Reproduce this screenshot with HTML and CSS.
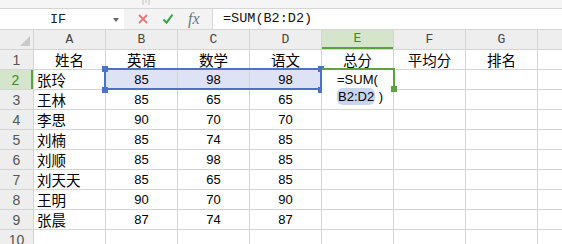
FILE: index.html
```html
<!DOCTYPE html>
<html lang="en">
<head>
    <meta charset="UTF-8">
    <meta name="viewport" content="width=device-width, initial-scale=1.0">
    <title>Sheet</title>
    <link rel="stylesheet" href="styles.css">
</head>
<body>
<div class="topStrip">
    <svg class="grip" width="10" height="6" viewBox="0 0 10 6"><path d="M2 0v5M5 0v3M8 0v5" stroke="#c4c4c4" stroke-width="1" fill="none"/></svg>
</div>

<div class="formulaBar">
    <div class="nameBox">
        <span class="nameText">IF</span>
        <span class="arrow"></span>
    </div>
    <div class="tools">
        <svg width="12" height="12" viewBox="0 0 12 12"><path d="M2 2l8 8M10 2l-8 8" stroke="#e5787a" stroke-width="1.8" fill="none"/></svg>
        <svg width="12" height="12" viewBox="0 0 12 12"><path d="M1.5 6.5l3 3.2 6-8" stroke="#3fa14a" stroke-width="2" fill="none"/></svg>
        <span class="fx">fx</span>
    </div>
    <div class="formula">=SUM(B2:D2)</div>
</div>

<div class="sheet">
    <div class="corner"><span class="tri"></span></div>
    <div class="colHead">A</div>
    <div class="colHead">B</div>
    <div class="colHead">C</div>
    <div class="colHead">D</div>
    <div class="colHead active">E</div>
    <div class="colHead">F</div>
    <div class="colHead">G</div>
    <div class="colHead"></div>

    <div class="rowHead">1</div>
    <div class="cell mid cn">姓名</div>
    <div class="cell mid cn">英语</div>
    <div class="cell mid cn">数学</div>
    <div class="cell mid cn">语文</div>
    <div class="cell mid cn">总分</div>
    <div class="cell mid cn">平均分</div>
    <div class="cell mid cn">排名</div>
    <div class="cell"></div>

    <div class="rowHead active">2</div>
    <div class="cell cn">张玲</div>
    <div class="cell mid sel">85</div>
    <div class="cell mid sel">98</div>
    <div class="cell mid sel">98</div>
    <div class="cell"></div>
    <div class="cell"></div>
    <div class="cell"></div>
    <div class="cell"></div>

    <div class="rowHead">3</div>
    <div class="cell cn">王林</div>
    <div class="cell mid">85</div>
    <div class="cell mid">65</div>
    <div class="cell mid">65</div>
    <div class="cell"></div>
    <div class="cell"></div>
    <div class="cell"></div>
    <div class="cell"></div>

    <div class="rowHead">4</div>
    <div class="cell cn">李思</div>
    <div class="cell mid">90</div>
    <div class="cell mid">70</div>
    <div class="cell mid">70</div>
    <div class="cell"></div>
    <div class="cell"></div>
    <div class="cell"></div>
    <div class="cell"></div>

    <div class="rowHead">5</div>
    <div class="cell cn">刘楠</div>
    <div class="cell mid">85</div>
    <div class="cell mid">74</div>
    <div class="cell mid">85</div>
    <div class="cell"></div>
    <div class="cell"></div>
    <div class="cell"></div>
    <div class="cell"></div>

    <div class="rowHead">6</div>
    <div class="cell cn">刘顺</div>
    <div class="cell mid">85</div>
    <div class="cell mid">98</div>
    <div class="cell mid">85</div>
    <div class="cell"></div>
    <div class="cell"></div>
    <div class="cell"></div>
    <div class="cell"></div>

    <div class="rowHead">7</div>
    <div class="cell cn">刘天天</div>
    <div class="cell mid">85</div>
    <div class="cell mid">65</div>
    <div class="cell mid">85</div>
    <div class="cell"></div>
    <div class="cell"></div>
    <div class="cell"></div>
    <div class="cell"></div>

    <div class="rowHead">8</div>
    <div class="cell cn">王明</div>
    <div class="cell mid">90</div>
    <div class="cell mid">70</div>
    <div class="cell mid">90</div>
    <div class="cell"></div>
    <div class="cell"></div>
    <div class="cell"></div>
    <div class="cell"></div>

    <div class="rowHead">9</div>
    <div class="cell cn">张晨</div>
    <div class="cell mid">87</div>
    <div class="cell mid">74</div>
    <div class="cell mid">87</div>
    <div class="cell"></div>
    <div class="cell"></div>
    <div class="cell"></div>
    <div class="cell"></div>

    <div class="rowHead">10</div>
    <div class="cell"></div>
    <div class="cell"></div>
    <div class="cell"></div>
    <div class="cell"></div>
    <div class="cell"></div>
    <div class="cell"></div>
    <div class="cell"></div>
    <div class="cell"></div>

    <!-- selection B2:D2 -->
    <div class="selBox"></div>
    <span class="handle blue h1"></span>
    <span class="handle blue h2"></span>
    <span class="handle blue h3"></span>
    <span class="handle blue h4"></span>

    <!-- editing E2 -->
    <div class="editor">
        <div>=SUM(</div>
        <div><span class="ref">B2:D2</span> )</div>
    </div>
    <span class="greenTop"></span>
    <span class="greenRight"></span>
    <span class="handle green h5"></span>
</div>
</body>
</html>
```

FILE: styles.css
```css
*{
    margin: 0;
    padding: 0;
    box-sizing: border-box;
}
body{
    width: 562px;
    height: 244px;
    overflow: hidden;
    background-color: #fff;
    font-family: "Liberation Sans", Arial, sans-serif;
    color: #000;
}
.topStrip{
    height: 9px;
    background-color: #f5f5f5;
    border-bottom: 1px solid #d6d6d6;
    position: relative;
}
.grip{
    position: absolute;
    left: 141px;
    top: 0;
}
.formulaBar{
    height: 21px;
    display: flex;
    background-color: #f3f3f3;
    border-bottom: 1px solid #d6d6d6;
}
.nameBox{
    width: 124px;
    background-color: #fff;
    display: flex;
    align-items: center;
    justify-content: center;
    position: relative;
}
.nameText{
    font-family: "Liberation Mono", monospace;
    font-size: 13.5px;
    color: #222;
    margin-left: -8px;
}
.arrow{
    position: absolute;
    right: 5px;
    top: 9px;
    border-left: 3px solid transparent;
    border-right: 3px solid transparent;
    border-top: 4px solid #666;
}
.tools{
    width: 88px;
    display: flex;
    align-items: center;
    gap: 13px;
    padding-left: 13px;
}
.fx{
    font-family: "Liberation Serif", serif;
    font-style: italic;
    font-size: 16px;
    color: #66778f;
    margin-left: 1px;
}
.formula{
    flex: 1;
    background-color: #fff;
    border-left: 1px solid #d6d6d6;
    font-family: "Liberation Mono", monospace;
    font-size: 13.5px;
    line-height: 20px;
    padding-left: 10px;
    color: #111;
}
.sheet{
    position: relative;
    display: grid;
    grid-template-columns: 33px repeat(7, 71px) 1fr;
    grid-auto-rows: 19px;
    gap: 1px;
    background-color: #d4d4d4;
}
.corner{
    background-color: #eeeeee;
    position: relative;
}
.tri{
    position: absolute;
    right: 3px;
    bottom: 3px;
    border-left: 10px solid transparent;
    border-bottom: 10px solid #c9c9c9;
}
.colHead{
    background-color: #eeeeee;
    font-family: "Liberation Mono", monospace;
    font-size: 13px;
    color: #444;
    display: flex;
    align-items: center;
    justify-content: center;
}
.colHead.active{
    background-color: #d5e5cb;
    color: #3d8a28;
    border-bottom: 2px solid #5ea13f;
}
.rowHead{
    background-color: #eeeeee;
    font-size: 14px;
    color: #555;
    display: flex;
    align-items: center;
    justify-content: center;
}
.rowHead.active{
    background-color: #d5e5cb;
    color: #3d8a28;
    border-right: 2px solid #5ea13f;
}
.cell{
    background-color: #fff;
    font-size: 13px;
    display: flex;
    align-items: center;
    padding-left: 3px;
}
.cell.mid{
    justify-content: center;
    padding-left: 0;
}
.cn{
    font-family: "Noto Sans CJK SC", sans-serif;
    font-size: 14.5px;
}
.cell.sel{
    background-color: #dde3f5;
}
.selBox{
    position: absolute;
    left: 104px;
    top: 38px;
    width: 218px;
    height: 22px;
    border: 2px solid #4a72c6;
}
.handle{
    position: absolute;
    width: 6px;
    height: 6px;
}
.blue{
    background-color: #4a72c6;
}
.green{
    background-color: #5ea13f;
}
.h1{ left: 102px; top: 36px; }
.h2{ left: 102px; top: 57px; }
.h3{ left: 318px; top: 36px; }
.h4{ left: 318px; top: 57px; }
.h5{ left: 391px; top: 56px; }
.editor{
    position: absolute;
    left: 322px;
    top: 40px;
    width: 71px;
    height: 38px;
    background-color: #fff;
    font-size: 13px;
    line-height: 17px;
    padding-left: 15px;
    padding-top: 1px;
}
.ref{
    background-color: #c9d5ef;
    border-radius: 6px;
    padding: 1px 1px;
}
.greenTop{
    position: absolute;
    left: 322px;
    top: 38px;
    width: 73px;
    height: 2px;
    background-color: #5ea13f;
}
.greenRight{
    position: absolute;
    left: 393px;
    top: 38px;
    width: 2px;
    height: 21px;
    background-color: #5ea13f;
}
```
